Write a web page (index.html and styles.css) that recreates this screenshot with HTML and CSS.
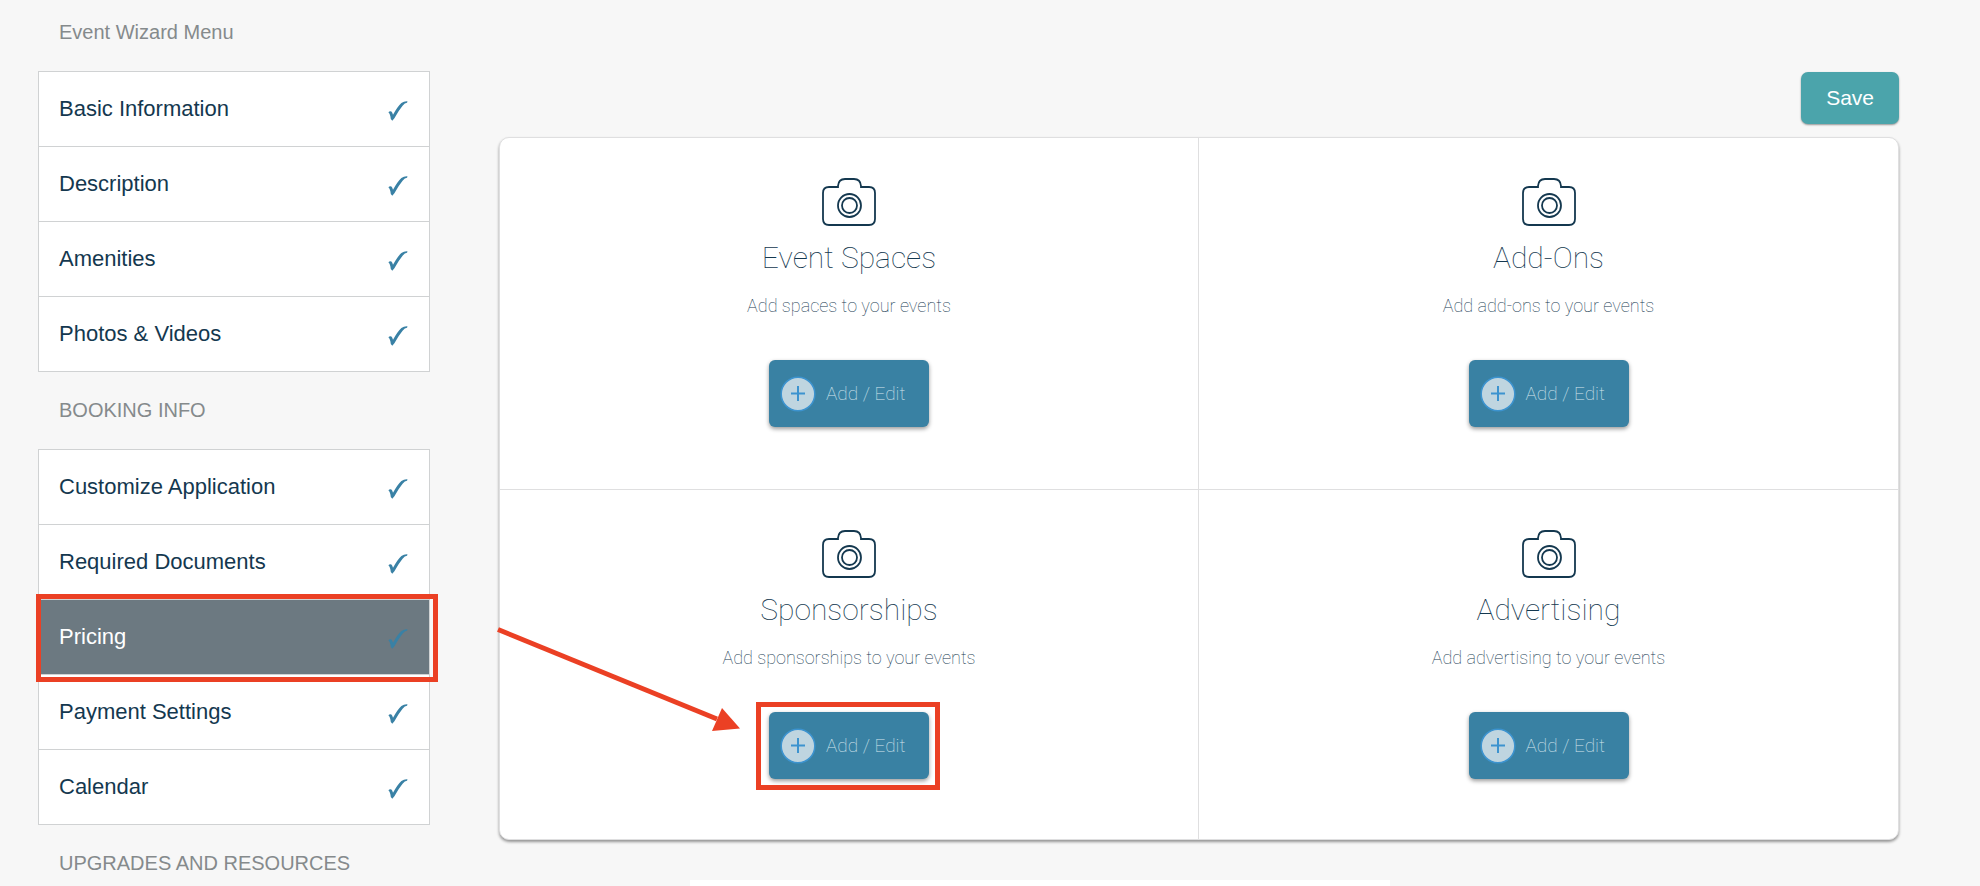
FILE: index.html
```html
<!DOCTYPE html>
<html lang="en">
<head>
<meta charset="utf-8">
<title>Event Wizard</title>
<link rel="stylesheet" href="styles.css">
</head>
<body>
<svg class="sprite" aria-hidden="true">
  <symbol id="check" viewBox="0 0 20 20">
    <path d="M0.4 11.2 Q1.6 9.9 3.4 10.4 Q4.4 11.4 5 13.8 Q9.6 5.4 13.4 2 Q16.400 0 19.6 0.400 L19 1.8 Q16.8 2 14.6 4.800 Q10.8 9.4 6.4 17.2 L4.3 19.8 L2.8 18 Q2.2 12.6 0.4 11.2 Z" fill="currentColor"/>
  </symbol>
  <symbol id="camera" viewBox="0 0 54 48">
    <g fill="none" stroke="currentColor" stroke-width="1.800">
      <path d="M7 9 H16 V8 Q16.500 1 23 1 H32 Q38.500 1 39 8 V9 H47 Q53 9 53 15 V41 Q53 47 47 47 H7 Q1 47 1 41 V15 Q1 9 7 9 Z"/>
      <circle cx="27.500" cy="27.500" r="11.500"/>
      <circle cx="27.500" cy="27.500" r="7.500"/>
    </g>
  </symbol>
  <symbol id="plus" viewBox="0 0 36 36">
    <circle cx="18" cy="18" r="16.800" fill="#bfd5e0" stroke="#3c93cf" stroke-width="1.500"/>
    <path d="M11 17.500 H25 M18 10 V25" fill="none" stroke="#3c93cf" stroke-width="2"/>
  </symbol>
</svg>
<div class="page">
  <nav class="sidebar" aria-label="Event wizard">
    <h2 class="menu-title menu-title-first">Event Wizard Menu</h2>
    <ul class="menu">
      <li class="menu-item"><a class="menu-link" href="#">Basic Information<svg class="check"><use href="#check"/></svg></a></li>
      <li class="menu-item"><a class="menu-link" href="#">Description<svg class="check"><use href="#check"/></svg></a></li>
      <li class="menu-item"><a class="menu-link" href="#">Amenities<svg class="check"><use href="#check"/></svg></a></li>
      <li class="menu-item"><a class="menu-link" href="#">Photos &amp; Videos<svg class="check"><use href="#check"/></svg></a></li>
    </ul>
    <h2 class="menu-title">BOOKING INFO</h2>
    <ul class="menu">
      <li class="menu-item"><a class="menu-link" href="#">Customize Application<svg class="check"><use href="#check"/></svg></a></li>
      <li class="menu-item"><a class="menu-link" href="#">Required Documents<svg class="check"><use href="#check"/></svg></a></li>
      <li class="menu-item menu-item-marked"><a class="menu-link menu-link-active" href="#" aria-current="page">Pricing<svg class="check"><use href="#check"/></svg></a></li>
      <li class="menu-item"><a class="menu-link" href="#">Payment Settings<svg class="check"><use href="#check"/></svg></a></li>
      <li class="menu-item"><a class="menu-link" href="#">Calendar<svg class="check"><use href="#check"/></svg></a></li>
    </ul>
    <h2 class="menu-title menu-title-last">UPGRADES AND RESOURCES</h2>
  </nav>
  <main class="content">
    <div class="toolbar"><button class="save" type="button">Save</button></div>
    <div class="panel">
      <section class="card">
        <svg class="camera"><use href="#camera"/></svg>
        <h3 class="card-title">Event Spaces</h3>
        <p class="card-text">Add spaces to your events</p>
        <div class="action"><button class="add" type="button"><svg class="plus"><use href="#plus"/></svg>Add / Edit</button></div>
      </section>
      <section class="card">
        <svg class="camera"><use href="#camera"/></svg>
        <h3 class="card-title">Add-Ons</h3>
        <p class="card-text">Add add-ons to your events</p>
        <div class="action"><button class="add" type="button"><svg class="plus"><use href="#plus"/></svg>Add / Edit</button></div>
      </section>
      <section class="card">
        <svg class="camera"><use href="#camera"/></svg>
        <h3 class="card-title">Sponsorships</h3>
        <p class="card-text">Add sponsorships to your events</p>
        <div class="action action-marked">
          <button class="add" type="button"><svg class="plus"><use href="#plus"/></svg>Add / Edit</button>
          <svg class="arrow" viewBox="0 0 244 106"><path d="M1 3.500 L220 93" stroke="#eb4024" stroke-width="5"/><path d="M225 82 L243 102.500 L215 105 Z" fill="#eb4024"/></svg>
        </div>
      </section>
      <section class="card">
        <svg class="camera"><use href="#camera"/></svg>
        <h3 class="card-title">Advertising</h3>
        <p class="card-text">Add advertising to your events</p>
        <div class="action"><button class="add" type="button"><svg class="plus"><use href="#plus"/></svg>Add / Edit</button></div>
      </section>
    </div>
    <div class="next-panel"></div>
  </main>
</div>
</body>
</html>
```
FILE: styles.css
```css
* {
  box-sizing: border-box;
}

body {
  margin: 0;
  background: #f7f7f7;
  color: #14384f;
  font-family: "Liberation Sans", Arial, sans-serif;
}

.sprite {
  display: none;
}

.page {
  display: flex;
  gap: 69px;
  min-height: 100vh;
  padding: 0 81px 0 38px;
}

.sidebar {
  flex: 0 0 392px;
}

.menu-title {
  margin: 0;
  padding: 26px 21px 27px;
  color: #858a8c;
  font-size: 20px;
  font-weight: 400;
  line-height: 24px;
}

.menu-title-first {
  padding-top: 20px;
}

.menu-title-last {
  padding-bottom: 0;
}

.menu {
  margin: 0;
  padding: 0;
  border: 1px solid #d0d2d3;
  background: #fff;
  list-style: none;
}

.menu-item {
  position: relative;
}

.menu-item + .menu-item {
  border-top: 1px solid #d0d2d3;
}

.menu-link {
  display: flex;
  align-items: center;
  justify-content: space-between;
  height: 74px;
  padding: 0 21px 0 20px;
  color: #14384f;
  font-size: 22px;
  text-decoration: none;
}

.menu-link-active {
  background: #6c7981;
  color: #fff;
}

.menu-item-marked::after {
  content: "";
  position: absolute;
  z-index: 1;
  inset: -6px -9px -8px -3px;
  border: 5px solid #eb4024;
}

.check {
  width: 20px;
  height: 20px;
  margin-top: 4px;
  color: #3981a5;
}

.content {
  display: flex;
  flex: 1;
  flex-direction: column;
  min-width: 0;
  padding-top: 72px;
}

.toolbar {
  display: flex;
  justify-content: flex-end;
  margin-bottom: 13px;
}

.save {
  height: 52px;
  padding: 0 25px;
  border: 0;
  border-radius: 7px;
  background: #4ba4ab;
  box-shadow: 0 1px 2px rgba(0, 0, 0, 0.4);
  color: #fff;
  font-family: inherit;
  font-size: 21px;
}

.panel {
  display: grid;
  grid-template-columns: 1fr 1fr;
  border: 1px solid #dfdfe0;
  border-radius: 10px;
  background: #fff;
  box-shadow: 0 2px 3px rgba(0, 0, 0, 0.4);
}

.card {
  display: flex;
  flex-direction: column;
  align-items: center;
  padding: 40px 20px 60px;
}

.card:nth-child(odd) {
  border-right: 1px solid #dfdfe0;
}

.card:nth-child(-n + 2) {
  padding-bottom: 62px;
  border-bottom: 1px solid #dfdfe0;
}

.camera {
  width: 54px;
  height: 48px;
}

.card-title {
  margin: 12px 0 0;
  font-family: Roboto, "Liberation Sans", sans-serif;
  font-size: 30px;
  font-weight: 100;
  line-height: 40px;
}

.card-text {
  margin: 16px 0 0;
  font-family: Roboto, "Liberation Sans", sans-serif;
  font-size: 18px;
  font-weight: 100;
  line-height: 24px;
}

.action {
  position: relative;
  margin-top: 42px;
}

.add {
  display: flex;
  align-items: center;
  gap: 10px;
  width: 160px;
  height: 67px;
  padding: 0 0 0 11px;
  border: 0;
  border-radius: 6px;
  background: #3981a3;
  box-shadow: 0 2px 4px rgba(0, 0, 0, 0.4);
  color: #d5e5ed;
  font-family: Roboto, "Liberation Sans", sans-serif;
  font-size: 19px;
  font-weight: 100;
  white-space: nowrap;
}

.plus {
  flex: none;
  width: 36px;
  height: 36px;
}

.action-marked::after {
  content: "";
  position: absolute;
  inset: -10px -11px -11px -13px;
  border: 5px solid #eb4024;
  pointer-events: none;
}

.arrow {
  position: absolute;
  top: -86px;
  right: calc(100% + 28px);
  width: 244px;
  height: 106px;
}

.next-panel {
  flex: 1;
  width: 50%;
  min-height: 6px;
  margin: 40px 0 0 191px;
  background: #fff;
}
```
